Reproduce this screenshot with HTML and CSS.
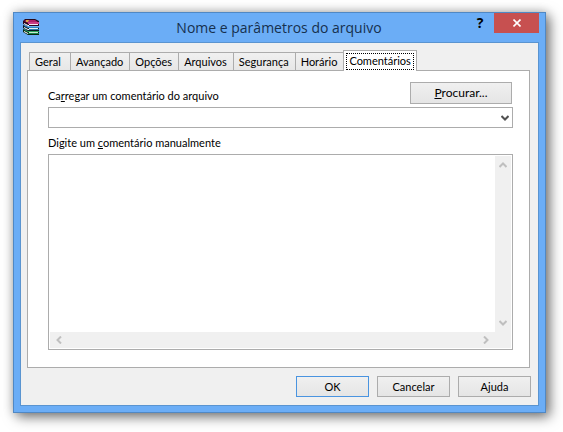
FILE: index.html
```html
<!DOCTYPE html>
<html lang="pt-BR">
<head>
    <meta charset="utf-8">
    <title>Nome e parâmetros do arquivo</title>
    <meta name="viewport" content="width=device-width, initial-scale=1.0">
    <link rel="stylesheet" href="styles.css">
</head>

<body>
    <main class="window">
        <header class="titlebar">
            <svg class="app-icon" viewBox="0 0 17 17" width="17" height="17" aria-hidden="true">
                <!-- livro de baixo -->
                <path d="M0 10l5 2h11v4H5L0 13z" fill="#0a2410"/>
                <path d="M1 10l4 2h11v1H5L1 11z" fill="#2aa45c"/>
                <path d="M6 13h9v1H6z" fill="#c8e8d0"/>
                <path d="M1 12l4 2h1v1H5L1 13z" fill="#fff"/>
                <path d="M5 14h11v1H5z" fill="#18884c"/>
                <!-- livro do meio -->
                <path d="M0 6l5 2h11v4H5L0 9z" fill="#0a1420"/>
                <path d="M1 6l4 2h11v1H5L1 7z" fill="#3088b8"/>
                <path d="M6 9h9v1H6z" fill="#e8f0f4"/>
                <path d="M1 8l4 2h1v1H5L1 9z" fill="#fff"/>
                <path d="M6 10h10v1H6z" fill="#2878a8"/>
                <!-- livro de cima -->
                <path d="M0 2l2-2h10l4 2v5H5L0 5z" fill="#2a0818"/>
                <path d="M1 2l2-1h9l4 3H5z" fill="#b02068"/>
                <path d="M3 1h3l-1 2H3z" fill="#d8a848"/>
                <path d="M5 3h11v2H5z" fill="#c83c84"/>
                <path d="M6 5h9v1H6z" fill="#f8e8f0"/>
                <path d="M1 4l4 2h1v1H5L1 5z" fill="#fff"/>
            </svg>
            <h1 class="title">Nome e parâmetros do arquivo</h1>
            <button type="button" class="help">?</button>
            <button type="button" class="close" aria-label="Fechar">
                <svg viewBox="0 0 8 8" width="8" height="8" aria-hidden="true">
                    <path d="M0.5 0.5l7 7M7.5 0.5l-7 7" stroke="#fff" stroke-width="1.6"/>
                </svg>
            </button>
        </header>

        <form class="client">
            <div class="tabs" role="tablist">
                <button type="button" class="tab" role="tab">Geral</button>
                <button type="button" class="tab" role="tab">Avançado</button>
                <button type="button" class="tab" role="tab">Opções</button>
                <button type="button" class="tab" role="tab">Arquivos</button>
                <button type="button" class="tab" role="tab">Segurança</button>
                <button type="button" class="tab" role="tab">Horário</button>
                <button type="button" class="tab active" role="tab" aria-selected="true"><span class="focus">Comentários</span></button>
            </div>

            <section class="panel" role="tabpanel">
                <div class="load-row">
                    <label for="arquivo">Ca<u>r</u>regar um comentário do arquivo</label>
                    <button type="button" class="btn browse"><u>P</u>rocurar...</button>
                </div>
                <div class="combo">
                    <select id="arquivo">
                        <option value=""></option>
                    </select>
                    <svg class="combo-arrow" viewBox="0 0 8 6" width="8" height="6" aria-hidden="true">
                        <path d="M0.5 1L4 4.5L7.5 1" fill="none" stroke="#505050" stroke-width="2"/>
                    </svg>
                </div>

                <label class="comment-label" for="comentario">Digite um <u>c</u>omentário manualmente</label>
                <div class="editor">
                    <textarea id="comentario"></textarea>
                    <div class="scroll vertical">
                        <svg viewBox="0 0 8 6" width="8" height="6"><path d="M0.5 5L4 1.5L7.5 5"/></svg>
                        <svg viewBox="0 0 8 6" width="8" height="6"><path d="M0.5 1L4 4.5L7.5 1"/></svg>
                    </div>
                    <div class="scroll horizontal">
                        <svg viewBox="0 0 6 8" width="6" height="8"><path d="M5 0.5L1.5 4L5 7.5"/></svg>
                        <svg viewBox="0 0 6 8" width="6" height="8"><path d="M1 0.5L4.5 4L1 7.5"/></svg>
                    </div>
                    <div class="corner"></div>
                </div>
            </section>

            <footer class="actions">
                <button type="submit" class="btn default">OK</button>
                <button type="button" class="btn">Cancelar</button>
                <button type="button" class="btn">Ajuda</button>
            </footer>
        </form>
    </main>
</body>
</html>
```

FILE: styles.css
```css
* {
    box-sizing: border-box;
}

body {
    display: flex;
    min-height: 100vh;
    margin: 0;
    padding: 12px 17px 19px 13px;
    background: #fff;
    color: #000;
    font-family: Lato, "Open Sans", sans-serif;
    font-size: 11px;
    line-height: 16px;
}

button,
select,
textarea {
    margin: 0;
    font: inherit;
    color: inherit;
}

.window {
    display: flex;
    flex: 1;
    flex-direction: column;
    padding: 0 6px 6px;
    border: 1px solid #5088c4;
    background: #6badf6;
    box-shadow: 4px 4px 12px rgba(0, 0, 0, 0.5), 0 0 10px rgba(0, 0, 0, 0.2);
}

.titlebar {
    display: flex;
    align-items: flex-start;
    height: 29px;
}

.app-icon {
    margin: 6px 0 0 3px;
}

.title {
    flex: 1;
    margin: 3px 0 0 52px;
    color: #16304e;
    font-family: "Open Sans", sans-serif;
    font-size: 14px;
    font-weight: 400;
    line-height: 24px;
    text-align: center;
}

.help {
    width: 28px;
    height: 20px;
    padding: 0;
    border: 0;
    background: none;
    font-family: "Open Sans", sans-serif;
    font-size: 14px;
    font-weight: 700;
}

.close {
    display: flex;
    align-items: center;
    justify-content: center;
    width: 45px;
    height: 20px;
    padding: 0;
    border: 0;
    background: #c75050;
}

/* conteúdo da janela */
.client {
    display: flex;
    flex: 1;
    flex-direction: column;
    padding: 7px 7px 8px 6px;
    border: 1px solid #5a94d0;
    background: #f0f0f0;
}

.tabs {
    display: flex;
    align-items: flex-end;
    padding-left: 2px;
}

.tab {
    min-width: 42px;
    height: 18px;
    padding: 0 6px 0 5px;
    border: 1px solid #acacac;
    border-left-width: 0;
    border-bottom: 0;
    background: linear-gradient(#f0f0f0, #e7e7e7);
    text-align: left;
}

.tab:first-child {
    border-left-width: 1px;
}

.tab.active {
    z-index: 1;
    height: 21px;
    margin-left: -1px;
    margin-bottom: -1px;
    padding: 1px 2px;
    border-left-width: 1px;
    background: #fff;
}

.focus {
    display: block;
    height: 17px;
    padding: 0 2px;
    border: 1px dotted #000;
    line-height: 14px;
}

.panel {
    display: flex;
    flex: 1;
    flex-direction: column;
    margin-right: 1px;
    padding: 11px 16px 17px 20px;
    border: 1px solid #acacac;
    background: #fff;
}

.load-row {
    display: flex;
    align-items: flex-end;
    justify-content: space-between;
    margin-bottom: 3px;
}

.btn {
    width: 73px;
    height: 21px;
    padding: 0;
    border: 1px solid #acacac;
    background: linear-gradient(#f0f0f0, #e5e5e5);
    text-align: center;
}

.btn.browse {
    width: 102px;
    height: 22px;
    margin-right: 1px;
    font-size: 12px;
}

.btn.default {
    border-color: #4a94e0;
}

.combo {
    position: relative;
    height: 21px;
    margin-bottom: 7px;
}

.combo select {
    width: 100%;
    height: 21px;
    border: 1px solid #acacac;
    border-radius: 0;
    background: #fff;
    appearance: none;
}

.combo-arrow {
    position: absolute;
    top: 8px;
    right: 4px;
    pointer-events: none;
}

.comment-label {
    margin-bottom: 3px;
}

.editor {
    display: grid;
    flex: 1;
    grid-template-columns: 1fr 16px;
    grid-template-rows: 1fr 16px;
    padding: 1px;
    border: 1px solid #acacac;
}

.editor textarea {
    width: 100%;
    height: 100%;
    padding: 2px;
    border: 0;
    outline: 0;
    resize: none;
}

.scroll {
    display: flex;
    align-items: center;
    justify-content: space-between;
    background: #f0f0f0;
}

.scroll.vertical {
    flex-direction: column;
    padding: 6px 0;
}

.scroll.horizontal {
    padding: 0 6px;
}

.scroll path {
    fill: none;
    stroke: #bfbfbf;
    stroke-width: 2;
}

.corner {
    background: #f0f0f0;
}

.actions {
    display: flex;
    justify-content: flex-end;
    gap: 8px;
    margin-top: 8px;
}
```
